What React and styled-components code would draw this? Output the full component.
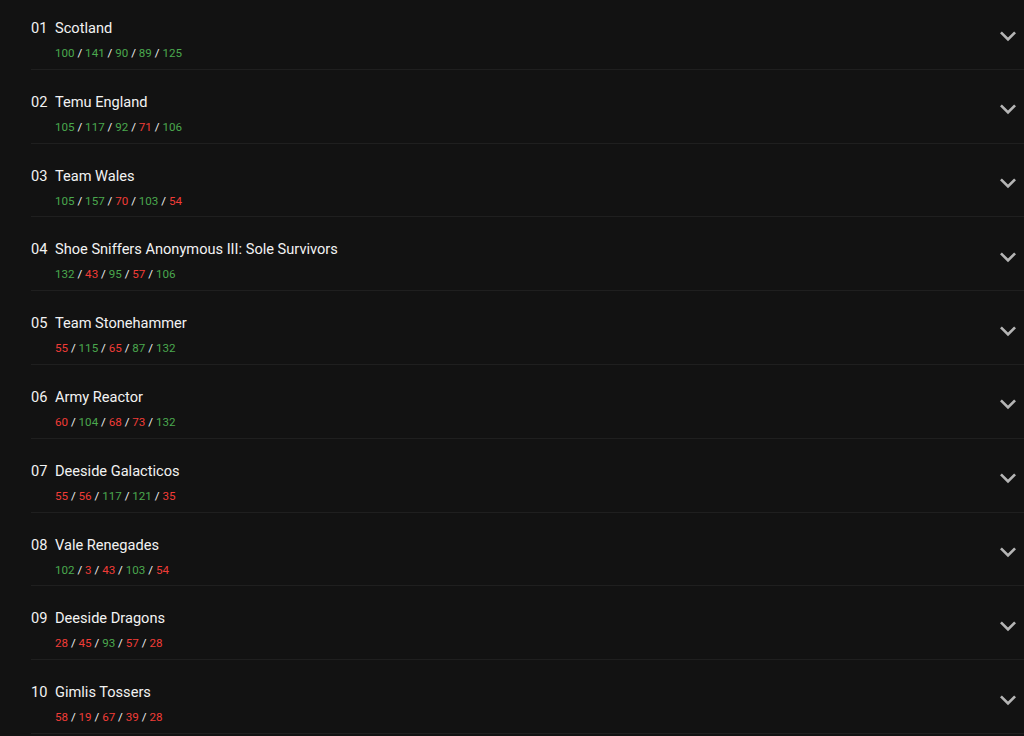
import React from "react";
import styled, { createGlobalStyle } from "styled-components";

const Global = createGlobalStyle`
  html, body { margin: 0; padding: 0; background: #121212; }
  body { font-family: Roboto, "Noto Sans", sans-serif; color: #e8e8e8; overflow: hidden; }
`;

const List = styled.ul`
  list-style: none;
  margin: 0;
  padding: 0 0 0 31px;
`;

const Row = styled.li`
  display: flex;
  align-items: center;
  padding: 22px 0 7.8px;
  border-bottom: 1px solid #1f1f1f;
  &:first-child { padding-top: 18px; }
`;

const Body = styled.div`
  flex: 1;
  display: flex;
  flex-direction: column;
  gap: 7px;
`;

const Title = styled.div`
  display: flex;
  gap: 8px;
  font-size: 14.6px;
  font-weight: 400;
  line-height: 20px;
  color: #f2f2f2;
`;

const Rank = styled.span`
  width: 16px;
`;

const Scores = styled.div`
  padding-left: 24px;
  font-size: 11.6px;
  font-weight: 400;
  line-height: 16px;
  color: #f4f4f4;
`;

const Score = styled.span`
  color: ${(p) => (p.$good ? "#4aa84e" : "#f03c37")};
`;

const Chevron = styled.svg`
  width: 32px;
  height: 32px;
  fill: #b5b5b5;
  flex-shrink: 0;
  margin-top: -8px;
`;

const teams = [
  ["Scotland", [100, 141, 90, 89, 125]],
  ["Temu England", [105, 117, 92, 71, 106]],
  ["Team Wales", [105, 157, 70, 103, 54]],
  ["Shoe Sniffers Anonymous III: Sole Survivors", [132, 43, 95, 57, 106]],
  ["Team Stonehammer", [55, 115, 65, 87, 132]],
  ["Army Reactor", [60, 104, 68, 73, 132]],
  ["Deeside Galacticos", [55, 56, 117, 121, 35]],
  ["Vale Renegades", [102, 3, 43, 103, 54]],
  ["Deeside Dragons", [28, 45, 93, 57, 28]],
  ["Gimlis Tossers", [58, 19, 67, 39, 28]],
];

export default function App() {
  return (
    <>
      <Global />
      <List>
        {teams.map(([name, scores], i) => (
          <Row key={name}>
            <Body>
              <Title>
                <Rank>{String(i + 1).padStart(2, "0")}</Rank>
                <span>{name}</span>
              </Title>
              <Scores>
                {scores.map((s, j) => (
                  <React.Fragment key={j}>
                    {j > 0 && " / "}
                    <Score $good={s >= 75}>{s}</Score>
                  </React.Fragment>
                ))}
              </Scores>
            </Body>
            <Chevron viewBox="0 0 24 24">
              <path d="M16.59 8.59 12 13.17 7.41 8.59 6 10l6 6 6-6z" />
            </Chevron>
          </Row>
        ))}
      </List>
    </>
  );
}
